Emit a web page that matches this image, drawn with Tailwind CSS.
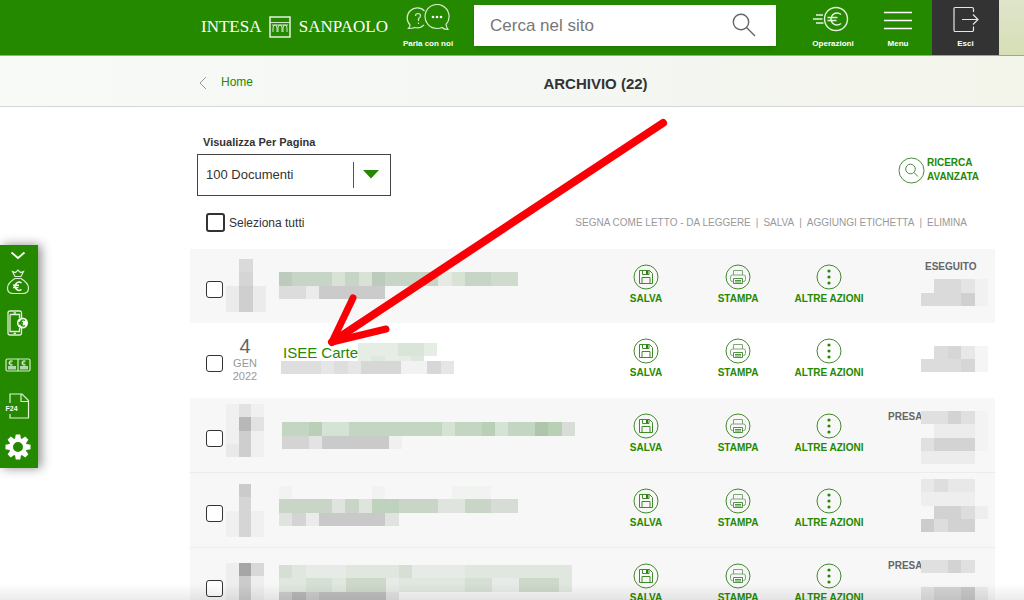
<!DOCTYPE html>
<html lang="it">
<head>
<meta charset="utf-8">
<meta name="viewport" content="width=device-width, initial-scale=1">
<title>Archivio</title>
<script src="https://cdn.jsdelivr.net/npm/@tailwindcss/browser@4"></script>
</head>
<body class="bg-white font-['Liberation_Sans',Arial,sans-serif] text-[#333]">

<!-- Shared icons -->
<svg class="hidden" aria-hidden="true">
  <symbol id="save" viewBox="0 0 26 26">
    <g fill="none" stroke="#3f8a2a" stroke-width="1">
      <circle cx="13" cy="13" r="12"/>
      <path d="M6.500 6.500H16.500L19.500 9.500V19.500H6.500ZM9.500 6.500V10.500H16V6.500M9 19.500V13.500H17V19.500"/>
    </g>
    <path d="M13 7h2v3h-2z" fill="#258900"/>
  </symbol>
  <symbol id="print" viewBox="0 0 26 26">
    <circle cx="13" cy="13" r="12" fill="none" stroke="#3f8a2a"/>
    <g fill="none" stroke="#7fa477">
      <path d="M8.500 11V6.500H17.500V11M8.500 17.500H7.500Q5.500 17.500 5.500 15.500V13Q5.500 11 7.500 11H18.500Q20.500 11 20.500 13V15.500Q20.500 17.500 18.500 17.500H17.500"/>
      <path d="M8.500 14.500H17.500V19.500H8.500Z" stroke="#4f9440"/>
      <path d="M10 16.500H16M10 18H16" stroke="#4f9440"/>
    </g>
  </symbol>
  <symbol id="more" viewBox="0 0 26 26">
    <circle cx="13" cy="13" r="12" fill="none" stroke="#3f8a2a"/>
    <g fill="#258900"><circle cx="13" cy="7" r="1.600"/><circle cx="13" cy="13" r="1.600"/><circle cx="13" cy="19" r="1.600"/></g>
  </symbol>
</svg>

<div class="relative flex h-screen flex-col overflow-hidden">

  <header class="flex h-14 shrink-0 border-b border-[#8fb383] bg-[#258900] pl-[201px] text-[8px] font-bold text-white">
    <a href="#" class="flex w-[187px] shrink-0 items-center justify-between pb-[2px] font-['Liberation_Serif',serif] text-[17px] font-normal" aria-label="Intesa Sanpaolo">
      <span>INTESA</span>
      <svg class="size-[22px] shrink-0" viewBox="0 0 22 22" fill="none" stroke="#e5f2df">
        <path d="M1 1H21V21H1Z" stroke-width="1.500"/>
        <path d="M1 6.500H21M3 9H19M4 16V12Q4 9 6 9Q8 9 8 12V16M9 16V12Q9 9 11 9Q13 9 13 12V16M14 16V12Q14 9 16 9Q18 9 18 12V16" stroke-width=".9"/>
      </svg>
      <span>SANPAOLO</span>
    </a>
    <a href="#" class="ml-[13px] flex w-[54px] shrink-0 flex-col items-center gap-[7px] whitespace-nowrap pt-1">
      <svg class="h-7 w-[44px]" viewBox="0 0 44 28" fill="none" stroke="#d5e8cd" stroke-width="1.200">
        <path d="M18.500 7A9.500 9.500 0 1 0 4 21Q4 23 2.500 24.500Q7 24.500 8.500 23.500Q14 25 18 21"/>
        <path d="M31 24.500A12 12 0 1 1 40 20.500Q40.500 23.500 42 25.500Q38 25.500 36 23.500Q34 24.500 31 24.500"/>
        <path d="M9.500 12Q9.500 9.500 12 9.500Q14.500 9.500 14.500 11.800Q14.500 13.500 12.500 14.500V17M12.500 18.500V20"/>
        <g fill="#fff" stroke="none"><circle cx="27" cy="13" r="1.300"/><circle cx="31" cy="13" r="1.300"/><circle cx="35" cy="13" r="1.300"/></g>
      </svg>
      <span class="leading-[10px]">Parla con noi</span>
    </a>
    <form class="ml-[19px] mr-3 mt-[5px] flex h-[41px] min-w-0 flex-1 items-center bg-white pl-4 pr-5 shadow-md">
      <input type="search" aria-label="Cerca nel sito" placeholder="Cerca nel sito" class="min-w-0 flex-1 text-[17px] font-normal text-[#333] outline-none placeholder:text-[#777]">
      <button type="button" aria-label="Cerca" class="pb-[2px]">
        <svg class="size-6" viewBox="0 0 24 24" fill="none" stroke="#666" stroke-width="1.400"><circle cx="9" cy="9" r="7.700"/><path d="M14.500 14.500L23 23"/></svg>
      </button>
    </form>
    <a href="#" class="flex w-[90px] shrink-0 flex-col items-center gap-[7px] pt-1">
      <svg class="h-7 w-[42px]" viewBox="0 0 42 28" fill="none" stroke="#e5f2df" stroke-width="1.400">
        <circle cx="24" cy="15" r="11.500"/>
        <path d="M29 10.500A6 6 0 1 0 29 19.500M15.500 13.500H25.500M15.500 16.500H24.500"/>
        <path d="M4 11H11M1 15H10.500M4 19H11.500"/>
      </svg>
      <span class="leading-[10px]">Operazioni</span>
    </a>
    <button type="button" class="flex w-10 shrink-0 flex-col items-center gap-[7px] pt-1">
      <svg class="h-7 w-7" viewBox="0 0 28 28" stroke="#fff" stroke-width="1.600"><path d="M0 8.500H28M0 16.500H28M0 24.500H28"/></svg>
      <span class="leading-[10px]">Menu</span>
    </button>
    <a href="#" class="ml-[14px] flex w-[67px] shrink-0 flex-col items-center gap-[7px] bg-[#333] pt-1">
      <svg class="h-7 w-[26px]" viewBox="0 0 26 28" fill="none" stroke="#e5e5e5" stroke-width="1.200">
        <path d="M20.500 8V5Q20.500 3.500 19 3.500H2Q1 3.500 1 5V26Q1 27.500 2 27.500H19Q20.500 27.500 20.500 26V22.500"/>
        <path d="M9 15.500H25M20 10.500L25 15.500L20 20.500"/>
      </svg>
      <span class="leading-[10px]">Esci</span>
    </a>
    <div class="w-[25px] shrink-0 bg-linear-to-b from-[#dfe4cb] to-[#d6dfb5]"></div>
  </header>

  <nav class="grid h-[51px] shrink-0 grid-cols-[1fr_auto_1fr] items-center border-b border-[#d3d7d7] bg-linear-to-r from-[#f7faf6] via-[#f4f7f4] to-[#f3f4ea] pl-[197px] pr-[30px]">
    <a href="#" class="flex items-center gap-[14px] pt-1 text-[12px] text-[#258900]">
      <svg class="h-[14px] w-[10px]" viewBox="0 0 10 14" fill="none" stroke="#999"><path d="M9 1L3 7L9 13"/></svg>
      <span class="pb-[2px]">Home</span>
    </a>
    <h1 class="pt-[6px] text-[15px] font-bold">ARCHIVIO (22)</h1>
  </nav>

  <main class="flex-1 pl-[190px] pr-[29px] pt-[28px]">
    <div class="flex items-end justify-between pl-[7px] pr-4">
      <div>
        <label for="size" class="block pl-[6px] text-[11px] font-bold leading-[14px]">Visualizza Per Pagina</label>
        <div class="relative mt-[5px] h-[42px] w-[194px]">
          <select id="size" class="size-full appearance-none border border-[#444] bg-white pl-2 text-[13px] text-[#333]"><option>100 Documenti</option></select>
          <svg class="pointer-events-none absolute right-[10px] top-2 h-[26px] w-7" viewBox="0 0 28 26"><path d="M0 0H1V26H0Z" fill="#555"/><path d="M10 8H26L18 16.500Z" fill="#258900"/></svg>
        </div>
      </div>
      <a href="#" class="flex items-center gap-[2px] pb-3 text-[10px] font-bold leading-[14px] text-[#258900]">
        <svg class="size-[27px]" viewBox="0 0 27 27" fill="none" stroke="#4d8a3b"><circle cx="13.500" cy="13.500" r="12.500"/><circle cx="12.500" cy="12" r="4.800"/><path d="M16 15.500L20 19.500"/></svg>
        <span>RICERCA<br>AVANZATA</span>
      </a>
    </div>

    <div class="mt-[17px] flex items-center justify-between pl-4 pr-7">
      <div class="flex items-center gap-1">
        <input id="all" type="checkbox" class="size-[19px] appearance-none rounded-[3px] border-2 border-[#333] bg-white checked:bg-[#258900]">
        <label for="all" class="text-[12px]">Seleziona tutti</label>
      </div>
      <div class="flex items-center gap-[5px] text-[10px] text-[#999]">
        <button type="button">SEGNA COME LETTO - DA LEGGERE</button><span>|</span>
        <button type="button">SALVA</button><span>|</span>
        <button type="button">AGGIUNGI ETICHETTA</button><span>|</span>
        <button type="button">ELIMINA</button>
      </div>
    </div>

    <table class="mt-[17px] w-full table-fixed border-collapse text-[10px] font-bold text-[#258900]">
      <colgroup><col class="w-9"><col class="w-[38px]"><col><col class="w-[92px]"><col class="w-[92px]"><col class="w-[90px]"><col class="w-[121px]"></colgroup>
      <tbody class="align-top">
        <tr class="h-[74px] bg-[#f7f7f7]">
          <td class="pl-4 pt-8"><input type="checkbox" aria-label="Seleziona documento 1" class="block size-[17px] appearance-none rounded-[3px] border border-[#333] bg-white checked:bg-[#258900]"></td>
          <td class="pt-[10px]"><svg class="block h-[53px] w-10" viewBox="0 0 3 4" preserveAspectRatio="none" shape-rendering="crispEdges"><path fill="#ebebeb" d="M0 2H3V4H0Z"/><path fill="#dadada" d="M1 0H2V1H1Z"/><path fill="#d5d5d5" d="M1 1H2V2H1Z"/><path fill="#cfcfcf" d="M1 2H2V4H1Z"/></svg></td>
          <td class="pl-[15px] pt-[23px]"><svg class="block h-[27px] w-[239px]" viewBox="0 0 18 2" preserveAspectRatio="none" shape-rendering="crispEdges"><path fill="#c6d5c5" d="M0 0H18V1H0Z"/><path fill="#bccbbc" d="M0 0H1V1H0ZM7 0H8V1H7Z"/><path fill="#d8e3d6" d="M4 0H5V1H4ZM6 0H7V1H6ZM13 0H14V1H13Z"/><path fill="#e5ebe4" d="M12 0H13V1H12Z"/><path fill="#cfdccd" d="M16 0H18V1H16Z"/><path fill="#dcdcdc" d="M0 1H2V2H0Z"/><path fill="#ebebeb" d="M2 1H3V2H2Z"/><path fill="#cbcbcb" d="M3 1H8V2H3Z"/></svg></td>
          <td class="pt-[15px]"><button type="button" class="mx-auto flex flex-col items-center gap-[3px] leading-3"><svg class="size-[26px]"><use href="#save"/></svg>SALVA</button></td>
          <td class="pt-[15px]"><button type="button" class="mx-auto flex flex-col items-center gap-[3px] leading-3"><svg class="size-[26px]"><use href="#print"/></svg>STAMPA</button></td>
          <td class="pt-[15px]"><button type="button" class="mx-auto flex flex-col items-center gap-[3px] whitespace-nowrap leading-3"><svg class="size-[26px]"><use href="#more"/></svg>ALTRE AZIONI</button></td>
          <td class="pl-[47px] pt-3 text-[#666]"><span class="block pl-1 leading-3">ESEGUITO</span><svg class="mt-[6px] block h-[27px] w-[67px]" viewBox="0 0 5 2" preserveAspectRatio="none" shape-rendering="crispEdges"><path fill="#dadada" d="M1 0H3V1H1ZM0 1H3V2H0Z"/><path fill="#e4e4e4" d="M3 0H4V1H3Z"/><path fill="#d0d0d0" d="M3 1H4V2H3Z"/><path fill="#f1f1f1" d="M4 0H5V2H4Z"/></svg></td>
        </tr>
        <tr class="h-[75px] bg-white">
          <td class="pl-4 pt-8"><input type="checkbox" aria-label="Seleziona ISEE Carte" class="block size-[17px] appearance-none rounded-[3px] border border-[#333] bg-white checked:bg-[#258900]"></td>
          <td class="pt-[13px] text-center text-[11px] font-normal leading-[13px] text-[#999]"><span class="block text-[20px] leading-[21px] text-[#666]">4</span>GEN<br>2022</td>
          <td class="pl-[17px] pt-5">
            <div class="flex"><a href="#" class="pl-[2px] pt-[1px] text-[15px] font-normal leading-[17px]">ISEE Carte</a><svg class="block h-[18px] w-[79px]" viewBox="0 0 79 18" shape-rendering="crispEdges"><path fill="#e6ede5" d="M0 0H79V13H66V18H0Z"/><path fill="#d9e5d8" d="M40 0H66V13H40Z"/><path fill="#dfe8de" d="M13 13H27V18H13ZM53 13H66V18H53Z"/></svg></div>
            <svg class="block h-[13px] w-[173px]" viewBox="0 0 13 1" preserveAspectRatio="none" shape-rendering="crispEdges"><path fill="#dedede" d="M0 0H13V1H0Z"/><path fill="#e6e6e6" d="M3 0H4V1H3ZM5 0H6V1H5ZM12 0H13V1H12Z"/><path fill="#d7d7d7" d="M6 0H9V1H6ZM11 0H12V1H11Z"/><path fill="#f2f2f2" d="M9 0H11V1H9Z"/></svg>
          </td>
          <td class="pt-[15px]"><button type="button" class="mx-auto flex flex-col items-center gap-[3px] leading-3"><svg class="size-[26px]"><use href="#save"/></svg>SALVA</button></td>
          <td class="pt-[15px]"><button type="button" class="mx-auto flex flex-col items-center gap-[3px] leading-3"><svg class="size-[26px]"><use href="#print"/></svg>STAMPA</button></td>
          <td class="pt-[15px]"><button type="button" class="mx-auto flex flex-col items-center gap-[3px] whitespace-nowrap leading-3"><svg class="size-[26px]"><use href="#more"/></svg>ALTRE AZIONI</button></td>
          <td class="pl-[47px] pt-[23px]"><svg class="block h-[26px] w-[67px]" viewBox="0 0 5 2" preserveAspectRatio="none" shape-rendering="crispEdges"><path fill="#dcdcdc" d="M1 0H3V1H1ZM0 1H3V2H0Z"/><path fill="#e8e8e8" d="M3 0H4V1H3Z"/><path fill="#d6d6d6" d="M2 0H3V1H2ZM3 1H4V2H3Z"/><path fill="#f5f5f5" d="M4 0H5V2H4Z"/></svg></td>
        </tr>
        <tr class="h-[74px] border-b border-[#ececec] bg-[#f7f7f7]">
          <td class="pl-4 pt-8"><input type="checkbox" aria-label="Seleziona documento 3" class="block size-[17px] appearance-none rounded-[3px] border border-[#333] bg-white checked:bg-[#258900]"></td>
          <td class="pt-[6px]"><svg class="block h-[53px] w-[38px]" viewBox="0 0 3 4" preserveAspectRatio="none" shape-rendering="crispEdges"><path fill="#f0f0f0" d="M0 0H3V4H0Z"/><path fill="#e2e2e2" d="M1 0H2V1H1ZM2 1H3V2H2Z"/><path fill="#b8b8b8" d="M1 1H2V2H1Z"/><path fill="#cecece" d="M1 2H2V4H1Z"/><path fill="#e9e9e9" d="M0 3H1V4H0Z"/></svg></td>
          <td class="pl-[18px] pt-6"><svg class="block h-[27px] w-[293px]" viewBox="0 0 22 2" preserveAspectRatio="none" shape-rendering="crispEdges"><path fill="#c3d6c1" d="M0 0H22V1H0Z"/><path fill="#b9cfb6" d="M2 0H3V1H2ZM15 0H16V1H15ZM20 0H21V1H20Z"/><path fill="#d4e3d3" d="M3 0H5V1H3ZM12 0H13V1H12ZM16 0H17V1H16Z"/><path fill="#afc6ac" d="M19 0H20V1H19Z"/><path fill="#d8ded7" d="M21 0H22V1H21Z"/><path fill="#d4d4d4" d="M0 1H2V2H0Z"/><path fill="#e3e3e3" d="M2 1H3V2H2Z"/><path fill="#cacaca" d="M3 1H8V2H3Z"/><path fill="#f0f0f0" d="M8 1H9V2H8Z"/></svg></td>
          <td class="pt-[15px]"><button type="button" class="mx-auto flex flex-col items-center gap-[3px] leading-3"><svg class="size-[26px]"><use href="#save"/></svg>SALVA</button></td>
          <td class="pt-[15px]"><button type="button" class="mx-auto flex flex-col items-center gap-[3px] leading-3"><svg class="size-[26px]"><use href="#print"/></svg>STAMPA</button></td>
          <td class="pt-[15px]"><button type="button" class="mx-auto flex flex-col items-center gap-[3px] whitespace-nowrap leading-3"><svg class="size-[26px]"><use href="#more"/></svg>ALTRE AZIONI</button></td>
          <td class="pl-[14px] pt-[13px] text-[#666]"><div class="flex"><span class="w-[33px] leading-3">PRESA</span><svg class="block h-[53px] w-[67px]" viewBox="0 0 5 4" preserveAspectRatio="none" shape-rendering="crispEdges"><path fill="#e0e0e0" d="M0 0H4V1H0ZM0 2H1V3H0Z"/><path fill="#d3d3d3" d="M2 0H3V1H2ZM1 2H4V3H1Z"/><path fill="#ececec" d="M1 1H4V2H1ZM0 3H4V4H0Z"/><path fill="#f3f3f3" d="M4 0H5V3H4Z"/></svg></div></td>
        </tr>
        <tr class="h-[75px] border-b border-[#ececec] bg-[#f7f7f7]">
          <td class="pl-4 pt-8"><input type="checkbox" aria-label="Seleziona documento 4" class="block size-[17px] appearance-none rounded-[3px] border border-[#333] bg-white checked:bg-[#258900]"></td>
          <td class="pt-[11px]"><svg class="block h-[53px] w-[38px]" viewBox="0 0 3 4" preserveAspectRatio="none" shape-rendering="crispEdges"><path fill="#f0f0f0" d="M0 2H3V4H0Z"/><path fill="#cbcbcb" d="M1 0H2V1H1Z"/><path fill="#d5d5d5" d="M1 1H2V4H1Z"/></svg></td>
          <td class="pl-[15px] pt-[13px]"><svg class="block h-10 w-[239px]" viewBox="0 0 18 3" preserveAspectRatio="none" shape-rendering="crispEdges"><path fill="#f0f3f0" d="M0 0H1V1H0ZM7 0H8V1H7ZM13 0H16V1H13Z"/><path fill="#c9d6c7" d="M0 1H18V2H0Z"/><path fill="#bfd2bd" d="M7 1H9V2H7Z"/><path fill="#dfe5de" d="M4 1H5V2H4ZM6 1H7V2H6ZM12 1H14V2H12Z"/><path fill="#d7ddd6" d="M16 1H18V2H16Z"/><path fill="#e1e3e1" d="M0 2H1V3H0ZM8 2H9V3H8Z"/><path fill="#d4d4d4" d="M1 2H2V3H1Z"/><path fill="#ebebeb" d="M2 2H3V3H2Z"/><path fill="#c9c9c9" d="M3 2H8V3H3Z"/></svg></td>
          <td class="pt-[15px]"><button type="button" class="mx-auto flex flex-col items-center gap-[3px] leading-3"><svg class="size-[26px]"><use href="#save"/></svg>SALVA</button></td>
          <td class="pt-[15px]"><button type="button" class="mx-auto flex flex-col items-center gap-[3px] leading-3"><svg class="size-[26px]"><use href="#print"/></svg>STAMPA</button></td>
          <td class="pt-[15px]"><button type="button" class="mx-auto flex flex-col items-center gap-[3px] whitespace-nowrap leading-3"><svg class="size-[26px]"><use href="#more"/></svg>ALTRE AZIONI</button></td>
          <td class="pl-[47px] pt-[6px]"><svg class="block h-[53px] w-[67px]" viewBox="0 0 5 4" preserveAspectRatio="none" shape-rendering="crispEdges"><path fill="#e8e8e8" d="M0 0H4V1H0Z"/><path fill="#dedede" d="M1 0H2V1H1Z"/><path fill="#eeeeee" d="M0 1H4V2H0ZM4 2H5V3H4Z"/><path fill="#d2d2d2" d="M1 2H3V3H1ZM2 3H4V4H2Z"/><path fill="#dddddd" d="M3 2H4V3H3ZM1 3H2V4H1Z"/><path fill="#cccccc" d="M0 3H1V4H0Z"/></svg></td>
        </tr>
        <tr class="h-[75px] bg-[#f7f7f7]">
          <td class="pl-4 pt-8"><input type="checkbox" aria-label="Seleziona documento 5" class="block size-[17px] appearance-none rounded-[3px] border border-[#333] bg-white checked:bg-[#258900]"></td>
          <td class="pt-[15px]"><svg class="block h-[53px] w-[38px]" viewBox="0 0 3 4" preserveAspectRatio="none" shape-rendering="crispEdges"><path fill="#eeeeee" d="M0 0H3V4H0Z"/><path fill="#a6a6a6" d="M1 0H2V1H1Z"/><path fill="#d8d8d8" d="M2 0H3V1H2Z"/><path fill="#cbcbcb" d="M1 1H2V4H1Z"/></svg></td>
          <td class="pl-[15px] pt-[17px]"><svg class="block h-10 w-[293px]" viewBox="0 0 22 3" preserveAspectRatio="none" shape-rendering="crispEdges"><path fill="#dfe7de" d="M0 0H22V2H0Z"/><path fill="#d6dfd4" d="M0 0H1V1H0ZM9 0H10V1H9ZM2 1H4V2H2ZM14 1H16V2H14Z"/><path fill="#cdd8cb" d="M5 1H8V2H5ZM18 1H21V2H18Z"/><path fill="#e7ebe7" d="M2 0H5V1H2ZM10 0H14V1H10ZM8 1H9V2H8ZM16 1H18V2H16Z"/><path fill="#cccccc" d="M0 2H1V3H0ZM2 2H3V3H2Z"/><path fill="#b8b8b8" d="M1 2H2V3H1Z"/><path fill="#bfbfbf" d="M3 2H8V3H3Z"/><path fill="#e3e3e3" d="M8 2H9V3H8Z"/></svg></td>
          <td class="pt-[15px]"><button type="button" class="mx-auto flex flex-col items-center gap-[3px] leading-3"><svg class="size-[26px]"><use href="#save"/></svg>SALVA</button></td>
          <td class="pt-[15px]"><button type="button" class="mx-auto flex flex-col items-center gap-[3px] leading-3"><svg class="size-[26px]"><use href="#print"/></svg>STAMPA</button></td>
          <td class="pt-[15px]"><button type="button" class="mx-auto flex flex-col items-center gap-[3px] whitespace-nowrap leading-3"><svg class="size-[26px]"><use href="#more"/></svg>ALTRE AZIONI</button></td>
          <td class="pl-[14px] pt-3 text-[#666]"><div class="flex"><span class="w-[33px] leading-3">PRESA</span><svg class="block h-[53px] w-[67px]" viewBox="0 0 5 4" preserveAspectRatio="none" shape-rendering="crispEdges"><path fill="#e0e0e0" d="M0 0H4V1H0ZM0 2H1V3H0Z"/><path fill="#d3d3d3" d="M2 0H3V1H2ZM1 2H4V3H1Z"/><path fill="#c7c7c7" d="M3 2H4V3H3ZM0 3H4V4H0Z"/><path fill="#eaeaea" d="M4 2H5V3H4Z"/></svg></div></td>
        </tr>
      </tbody>
    </table>
  </main>

  <!-- Quick actions docked on the left edge -->
  <aside class="absolute left-0 top-[245px] flex h-[223px] w-[38px] flex-col items-center bg-[#258900] pr-[3px] pt-[6px] shadow-[3px_0_10px_rgba(0,0,0,0.45)]">
    <button type="button" aria-label="Riduci"><svg class="block h-[9px] w-4" viewBox="0 0 16 9" fill="none" stroke="#fff" stroke-width="1.800"><path d="M1.500 1.500L8 7L14.500 1.500"/></svg></button>
    <a href="#" class="mt-[9px]" aria-label="Risparmio"><svg class="block h-[26px] w-6" viewBox="0 0 24 26" fill="none" stroke="#d8ebd0" stroke-width="1.200"><path d="M9 7.500L6.500 2.500L9.500 3.500L12 1L14.500 3.500L17.500 2.500L15 7.500ZM8.500 9.500H15.500M9 9.500Q1.500 14 1.500 19Q1.500 24.500 7 24.500H17Q22.500 24.500 22.500 19Q22.500 14 15 9.500"/><path stroke="#fff" stroke-width="1.500" d="M15.500 14A4 4 0 1 0 15.500 20.500M7 16.200H13M7 18.500H12.500"/></svg></a>
    <a href="#" class="mt-[15px]" aria-label="Ricarica cellulare"><svg class="block h-[26px] w-6" viewBox="0 0 24 26" fill="none" stroke="#e0f0d9" stroke-width="1.300"><path d="M15.500 8V3Q15.500 1 13.500 1H4Q2 1 2 3V23Q2 25 4 25H13.500Q15.500 25 15.500 23V18M4 4.500H13.500V8M13.500 18V21.500H4V4.500M7.500 2.800H10M7.500 23.300H10"/><circle cx="16.500" cy="13" r="5.500" fill="#fff" stroke="none"/><path stroke="#258900" d="M19 10.500A3 3 0 1 0 19 15.500M12.500 12.300H17M12.500 14H17"/></svg></a>
    <a href="#" class="mt-[22px]" aria-label="Bonifico"><svg class="block h-[14px] w-[26px]" viewBox="0 0 26 14" fill="none" stroke="#d8ebd0" stroke-width="1.200"><rect x="1" y="1" width="24" height="12" rx="1.500"/><path d="M13 1V13M7.500 3.500A2 2 0 1 0 7.500 6.500M3.500 5H6.500M20.500 3.500A2 2 0 1 0 20.500 6.500M16.500 5H19.500"/><path d="M3 8H11V11.500H3ZM15 8H23V11.500H15Z" fill="#b5d5aa" stroke="none"/></svg></a>
    <a href="#" class="relative mt-[21px]" aria-label="F24"><svg class="block h-[26px] w-6" viewBox="0 0 24 26" fill="none" stroke="#e0f0d9" stroke-width="1.200"><path d="M4 10V1H16L22.500 7.500V25H4V21M15 1V8.500H22.500"/></svg><span class="absolute left-0 top-[11px] text-[7px] font-bold leading-[9px] text-white">F24</span></a>
    <button type="button" class="mt-[15px]" aria-label="Impostazioni"><svg class="block size-[26px]" viewBox="0 0 26 26"><g fill="#fff"><path id="tooth" d="M10.800 0.500H15.200L16.200 6H9.800Z"/><use href="#tooth" transform="rotate(45 13 13)"/><use href="#tooth" transform="rotate(90 13 13)"/><use href="#tooth" transform="rotate(135 13 13)"/><use href="#tooth" transform="rotate(180 13 13)"/><use href="#tooth" transform="rotate(225 13 13)"/><use href="#tooth" transform="rotate(270 13 13)"/><use href="#tooth" transform="rotate(315 13 13)"/></g><circle cx="13" cy="13" r="7" fill="#258900" stroke="#fff" stroke-width="4"/></svg></button>
  </aside>

  <!-- Arrow pointing at the document -->
  <svg class="pointer-events-none absolute left-[320px] top-[110px] h-[240px] w-[360px]" viewBox="0 0 360 240" fill="none" stroke="#fa0006" stroke-linecap="round" stroke-linejoin="round"><path d="M343 13L12 232" stroke-width="8"/><path d="M33 188L12 232L66 219" stroke-width="7"/></svg>

  <div class="pointer-events-none absolute inset-x-0 bottom-0 h-4 bg-linear-to-b from-transparent to-black/8"></div>
</div>
</body>
</html>
